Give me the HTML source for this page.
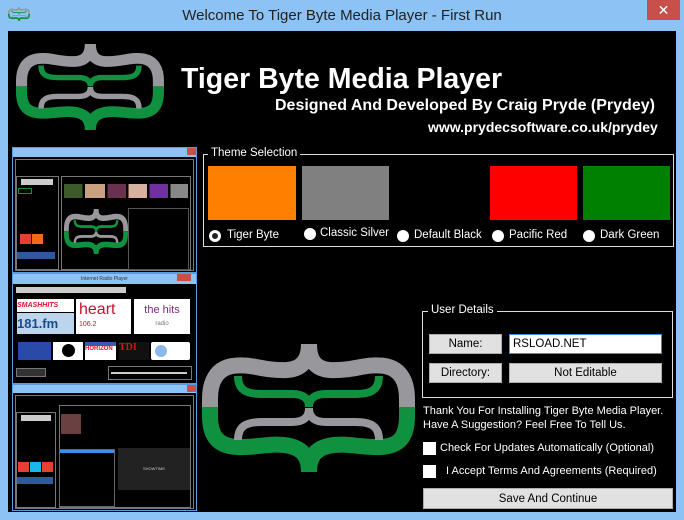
<!DOCTYPE html>
<html><head><meta charset="utf-8">
<style>
*{box-sizing:border-box;margin:0;padding:0}
body{width:684px;height:520px;background:#8cc3f4;position:relative;overflow:hidden;font-family:"Liberation Sans",sans-serif;font-size:11.5px;color:#fff}
.a{position:absolute}
.title{left:0;width:684px;text-align:center;top:7px;font-size:15px;color:#222}
.close{left:647px;top:0;width:33px;height:20px;background:#c7504b;color:#fff;text-align:center;font-size:14px;line-height:20px}
.main{left:8px;top:31px;width:668px;height:481px;background:#000}
.grp{border:1px solid #ddd}
.lg{background:#000;padding:0 3px}
.sw{height:54px}
.rad{width:12px;height:12px;border-radius:50%;background:#fff}
.btn{background:#e1e1e1;border:1px solid #adadad;color:#000;text-align:center}
.cb{width:13px;height:13px;background:#fff}
.t11{font-size:11px}
</style></head><body>
<svg width="0" height="0" style="position:absolute">
<defs>
<clipPath id="ct"><rect x="0" y="0" width="213" height="63"/></clipPath>
<clipPath id="cb"><rect x="0" y="63" width="213" height="80"/></clipPath>
<path id="outer" d="M107,0 C107,16 100,25 85,26 C60,27 50,19 30,22 C14,25 8,38 8,55 L8,72 C8,92 16,102 35,103 C55,104 70,98 88,102 C100,105 107,112 107,128 C107,112 114,105 126,102 C144,98 159,104 179,103 C198,102 205,92 205,72 L205,55 C205,38 199,25 183,22 C163,19 153,27 128,26 C113,25 107,16 107,0Z"/>
<g id="logo" fill="none">
<use href="#outer" stroke="#98989c" stroke-width="16" clip-path="url(#ct)"/>
<use href="#outer" stroke="#0f9140" stroke-width="16" clip-path="url(#cb)"/>
<path d="M36,32 C36,46 44,50 60,50 L90,50 C102,50 107,55 107,63 C107,55 112,50 124,50 L153,50 C169,50 177,46 177,32" stroke="#0f9140" stroke-width="8"/>
<path d="M36,96 C36,82 44,78 60,78 L90,78 C102,78 107,73 107,64 C107,73 112,78 124,78 L153,78 C169,78 177,82 177,96" stroke="#98989c" stroke-width="8"/>
</g>
</defs></svg>

<div class="a" style="left:8px;top:7px;width:22px;height:14px"><svg width="22" height="14" viewBox="0 0 213 128" preserveAspectRatio="none"><use href="#logo"/></svg></div>
<div class="a title">Welcome To Tiger Byte Media Player - First Run</div>
<div class="a close">✕</div>
<div class="a main"></div>

<svg class="a" style="left:16px;top:44px" width="148" height="86" viewBox="0 0 213 128" preserveAspectRatio="none"><use href="#logo"/></svg>
<div class="a" style="left:181px;top:63px;font-size:28.5px;font-weight:bold">Tiger Byte Media Player</div>
<div class="a" style="left:275px;top:97px;font-size:16px;font-weight:bold">Designed And Developed By Craig Pryde (Prydey)</div>
<div class="a" style="left:428px;top:119px;font-size:14px;font-weight:bold">www.prydecsoftware.co.uk/prydey</div>

<!-- left screenshots -->
<div class="a" style="left:12px;top:147px;width:185px;height:126px;background:#000;border:1px solid #5a9be0">
 <div class="a" style="left:0;top:0;width:183px;height:9px;background:#8cc3f4"></div>
 <div class="a" style="left:174px;top:0;width:9px;height:7px;background:#c7504b"></div>
 <div class="a" style="left:2px;top:11px;width:179px;height:112px;border:1px solid #777"></div>
 <div class="a" style="left:3px;top:28px;width:43px;height:94px;border:1px solid #777"></div>
 <div class="a" style="left:8px;top:31px;width:32px;height:6px;background:#ccc"></div>
 <div class="a" style="left:5px;top:40px;width:14px;height:6px;border:1px solid #0f9140"></div>
 <div class="a" style="left:7px;top:86px;width:11px;height:10px;background:#e84030"></div>
 <div class="a" style="left:19px;top:86px;width:11px;height:10px;background:#f56a1a"></div>
 <div class="a" style="left:4px;top:104px;width:38px;height:7px;background:#3b6fc4;opacity:.8"></div>
 <div class="a" style="left:48px;top:28px;width:130px;height:94px;border:1px solid #777"></div>
 <div class="a" style="left:51px;top:36px;width:124px;height:14px;background:linear-gradient(90deg,#3c5a2a 0 15%,#000 15% 17%,#c9a080 17% 33%,#000 33% 35%,#6a3050 35% 50%,#000 50% 52%,#d8b0a0 52% 67%,#000 67% 69%,#7030a0 69% 84%,#000 84% 86%,#888 86%)"></div>
 <div class="a" style="left:51px;top:61px;width:64px;height:45px"><svg width="64" height="45" viewBox="0 0 213 128" preserveAspectRatio="none"><use href="#logo"/></svg></div>
 <div class="a" style="left:115px;top:60px;width:61px;height:62px;border:1px solid #555"></div>
</div>
<div class="a" style="left:12px;top:273px;width:185px;height:111px;background:#000;border:1px solid #5a9be0">
 <div class="a" style="left:0;top:0;width:183px;height:10px;background:#8cc3f4;color:#333;font-size:5px;text-align:center;line-height:10px">Internet Radio Player</div>
 <div class="a" style="left:164px;top:0;width:14px;height:7px;background:#c7504b"></div>
 <div class="a" style="left:3px;top:13px;width:110px;height:6px;background:#ccc"></div>
 <div class="a" style="left:4px;top:25px;width:57px;height:13px;background:#fff;color:#e01030;font-size:7px;font-weight:bold;font-style:italic;line-height:13px">SMASHHITS</div>
 <div class="a" style="left:4px;top:39px;width:57px;height:21px;background:#bcd4ec;color:#1a4a8a;font-size:13px;font-weight:bold;line-height:21px">181.fm</div>
 <div class="a" style="left:63px;top:25px;width:55px;height:35px;background:#fff;color:#c8102e;font-size:16px;line-height:22px;padding-left:3px">heart<div style="font-size:7px;line-height:7px">106.2</div></div>
 <div class="a" style="left:121px;top:25px;width:56px;height:35px;background:#fff;color:#7a2a80;font-size:11px;text-align:center;line-height:22px">the hits<div style="font-size:6px;line-height:6px;color:#777">radio</div></div>
 <div class="a" style="left:5px;top:68px;width:33px;height:18px;background:#2a4aa8"></div>
 <div class="a" style="left:40px;top:68px;width:30px;height:18px;background:#fff"><div style="margin:2px 9px;width:13px;height:13px;border-radius:50%;background:#000"></div></div>
 <div class="a" style="left:72px;top:68px;width:31px;height:18px;background:#fff;border-top:4px solid #3a5ab0;color:#e01020;font-size:6px;font-weight:bold">HORIZON</div>
 <div class="a" style="left:106px;top:68px;width:30px;height:18px;background:#111;color:#e01010;font-size:10px;font-weight:bold;font-family:'Liberation Serif',serif">TDI</div>
 <div class="a" style="left:138px;top:68px;width:39px;height:18px;background:#fff;border-radius:2px"><div style="margin:3px 4px;width:12px;height:12px;border-radius:50%;background:#8ab8e8"></div></div>
 <div class="a" style="left:3px;top:94px;width:30px;height:9px;background:#333;border:1px solid #777"></div>
 <div class="a" style="left:95px;top:92px;width:84px;height:14px;border:1px solid #777"></div>
 <div class="a" style="left:98px;top:98px;width:76px;height:2px;background:#ccc"></div>
</div>
<div class="a" style="left:12px;top:384px;width:185px;height:127px;background:#000;border:1px solid #5a9be0">
 <div class="a" style="left:0;top:0;width:183px;height:8px;background:#8cc3f4"></div>
 <div class="a" style="left:174px;top:0;width:9px;height:7px;background:#c7504b"></div>
 <div class="a" style="left:2px;top:10px;width:179px;height:114px;border:1px solid #777"></div>
 <div class="a" style="left:3px;top:27px;width:40px;height:96px;border:1px solid #777"></div>
 <div class="a" style="left:8px;top:30px;width:30px;height:6px;background:#ccc"></div>
 <div class="a" style="left:5px;top:77px;width:11px;height:10px;background:#e84030"></div>
 <div class="a" style="left:17px;top:77px;width:11px;height:10px;background:#1ab7ea"></div>
 <div class="a" style="left:29px;top:77px;width:11px;height:10px;background:#e84030"></div>
 <div class="a" style="left:4px;top:92px;width:36px;height:7px;background:#3b6fc4;opacity:.8"></div>
 <div class="a" style="left:46px;top:20px;width:132px;height:103px;border:1px solid #777"></div>
 <div class="a" style="left:48px;top:29px;width:20px;height:20px;background:#6a4040"></div>
 <div class="a" style="left:46px;top:64px;width:56px;height:58px;border:1px solid #666"></div>
 <div class="a" style="left:47px;top:65px;width:54px;height:3px;background:#3a90e8"></div>
 <div class="a" style="left:105px;top:63px;width:72px;height:42px;background:#222;color:#ccc;font-size:4px;text-align:center;line-height:42px">SHOWTIME</div>
</div>

<!-- theme selection -->
<div class="a grp" style="left:203px;top:154px;width:471px;height:93px"></div>
<div class="a lg" style="left:208px;top:147px">Theme Selection</div>
<div class="a sw" style="left:208px;top:166px;width:88px;background:#ff8000"></div>
<div class="a sw" style="left:302px;top:166px;width:87px;background:#808080"></div>
<div class="a sw" style="left:490px;top:166px;width:87px;background:#ff0000"></div>
<div class="a sw" style="left:583px;top:166px;width:87px;background:#008000"></div>
<div class="a rad" style="left:209px;top:230px;border:3px solid #fff;background:#222"></div>
<div class="a" style="left:227px;top:229px">Tiger Byte</div>
<div class="a rad" style="left:304px;top:228px"></div>
<div class="a" style="left:320px;top:227px">Classic Silver</div>
<div class="a rad" style="left:397px;top:230px"></div>
<div class="a" style="left:414px;top:229px">Default Black</div>
<div class="a rad" style="left:492px;top:230px"></div>
<div class="a" style="left:509px;top:229px">Pacific Red</div>
<div class="a rad" style="left:583px;top:230px"></div>
<div class="a" style="left:600px;top:229px">Dark Green</div>

<svg class="a" style="left:202px;top:344px" width="213" height="128" viewBox="0 0 213 128"><use href="#logo"/></svg>

<!-- user details -->
<div class="a grp" style="left:422px;top:311px;width:251px;height:87px"></div>
<div class="a lg" style="left:428px;top:304px">User Details</div>
<div class="a btn" style="left:429px;top:334px;width:73px;height:20px;line-height:18px">Name:</div>
<div class="a" style="left:509px;top:334px;width:153px;height:20px;background:#fff;border:1px solid #3a8ee6;color:#000;padding-left:3px;line-height:18px">RSLOAD.NET</div>
<div class="a btn" style="left:429px;top:363px;width:73px;height:20px;line-height:18px">Directory:</div>
<div class="a btn" style="left:509px;top:363px;width:153px;height:20px;line-height:18px">Not Editable</div>
<div class="a t11" style="left:423px;top:404px;line-height:14px;white-space:nowrap">Thank You For Installing Tiger Byte Media Player.<br>Have A Suggestion? Feel Free To Tell Us.</div>
<div class="a cb" style="left:423px;top:442px"></div>
<div class="a t11" style="left:440px;top:442px;white-space:nowrap">Check For Updates Automatically (Optional)</div>
<div class="a cb" style="left:423px;top:465px"></div>
<div class="a t11" style="left:446px;top:465px;white-space:nowrap">I Accept Terms And Agreements (Required)</div>
<div class="a btn" style="left:423px;top:488px;width:250px;height:21px;line-height:20px">Save And Continue</div>
</body></html>
